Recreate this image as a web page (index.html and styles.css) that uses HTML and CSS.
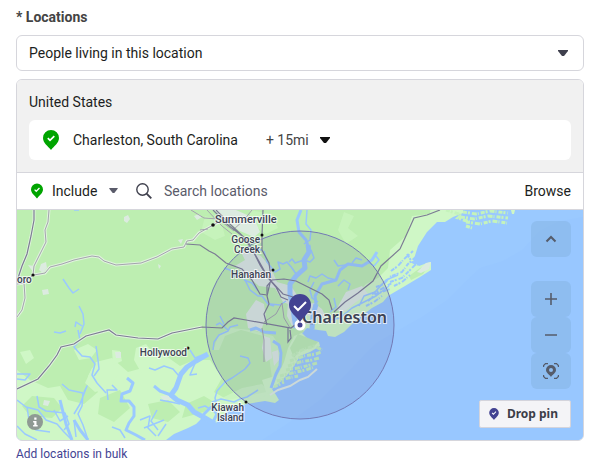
FILE: index.html
```html
<!DOCTYPE html>
<html lang="en">
<head>
    <meta charset="UTF-8">
    <meta name="viewport" content="width=device-width, initial-scale=1.0">
    <title>Locations</title>
    <link rel="stylesheet" href="styles.css">
</head>
<body>
    <svg class="defs" width="0" height="0" aria-hidden="true">
        <symbol id="pin" viewBox="0 0 16 20">
            <path d="M8 0a8 8 0 0 0-8 8c0 5 5 8 8 12c3-4 8-7 8-12a8 8 0 0 0-8-8z" fill="currentColor"/>
            <path d="M4.800 8.200l2.200 2.200l4.300-4.300" fill="none" stroke="#fff" stroke-width="1.700"/>
        </symbol>
        <symbol id="caret" viewBox="0 0 10 6">
            <path d="M0 0h10v1L6 6H4L0 1z" fill="currentColor"/>
        </symbol>
    </svg>

    <form class="locations">
        <label class="title" for="audience">* Locations</label>
        <div class="select-wrap audience">
            <select id="audience">
                <option>People living in this location</option>
                <option>People recently in this location</option>
            </select>
            <svg class="caret"><use href="#caret"/></svg>
        </div>

        <div class="panel">
            <div class="selected">
                <div class="country">United States</div>
                <div class="place">
                    <svg class="pin pin-large"><use href="#pin"/></svg>
                    <span class="place-name">Charleston, South Carolina</span>
                    <div class="select-wrap radius">
                        <select aria-label="Radius">
                            <option>+ 15mi</option>
                            <option>+ 25mi</option>
                        </select>
                        <svg class="caret"><use href="#caret"/></svg>
                    </div>
                </div>
            </div>

            <div class="search">
                <svg class="pin pin-small"><use href="#pin"/></svg>
                <div class="select-wrap mode">
                    <select aria-label="Include or exclude">
                        <option>Include</option>
                        <option>Exclude</option>
                    </select>
                    <svg class="caret"><use href="#caret"/></svg>
                </div>
                <svg class="search-icon" viewBox="0 0 16 16">
                    <circle cx="6.500" cy="6.500" r="5.700" fill="none" stroke="currentColor" stroke-width="1.400"/>
                    <path d="M10.600 10.600l4.700 4.700" stroke="currentColor" stroke-width="1.900"/>
                </svg>
                <input type="text" placeholder="Search locations" aria-label="Search locations">
                <button type="button" class="browse">Browse</button>
            </div>

            <div class="map">
                <svg class="map-canvas" viewBox="17 210 566 230" preserveAspectRatio="xMidYMid slice">
                    <rect class="water" x="-300" y="100" width="1200" height="500"/>
                    <path class="deep" d="M583 217L560 221L540 231L522 250L503 261L480 268L463 284L447 300L420 318L395 332L375 344L350 370L320 400L290 422L262 440H583z"/>

                    <!-- mainland and sea islands -->
                    <path class="marsh" d="M-300 100H466L463 213L453 217L445 222L437 222L427 232L418 246L413 262L419 266L427 263L431 262L431 270L420 277L405 286L393 293L388 296L383 302L372 308L360 317L350 326L344 332L335 337L328 336L326 331L318 330L307 328L302 333L309 340L319 342L320 346L310 352L300 356L294 366L288 374L278 384L272 389L276 395L279 400L275 403L265 401L247 404L231 408L222 416L216 423L208 422L202 418L196 424L188 428L174 434L166 440V500H-300z"/>
                    <path class="land" d="M-300 100H440L430 214L412 216L406 236L390 250L388 268L378 278L366 284L354 296L344 310L336 320L322 318L305 312L300 322L304 332L294 336L288 348L284 362L278 375L262 380L266 392L252 395L228 400L214 392L222 378L210 360L194 360L180 366L166 356L150 366L128 372L112 358L96 362L88 376L98 392L84 404L68 400L60 386L48 388L30 380L17 370L-300 370z"/>
                    <g class="marsh">
                        <path d="M92 368l14-6 12 12-8 14-15 4-10-9zM136 348l10-4 8 10 12 2 4 14-12 8-16-4-8-14zM112 350l8 1 2 10-9 4zM74 350l14-6 9 6-6 8-12 2zM20 352l10-2 4 8-8 6z"/>
                        <path d="M205 216l16 4 4 16-10 4-14-8zM250 210l22 4 6 14-12 6-16-12zM344 212l10 4-6 12 10 8-12 8-8-14z" opacity=".5"/>
                        <path d="M213 350l6-16 12-6 20 2 22 6 8 12v24l-8 14-4-30-6-20-22-6-16 6-6 14zM222 398l20-10 20-4 8 8-8 6-20 6-22 2z" opacity=".7"/>
                    </g>
                    <g class="land">
                        <path d="M32 396l22 2 8 10-10 10-22-2-8-10zM186 404l18-8 10 6-10 10-22 6zM148 404l20-4 12 12-12 10-16-4zM100 398l20-8 10 18-16 14-16-8zM409 276l11-8 8-2-5 8-12 6z"/>
                        <path d="M298 334l10 4 10 4-6 6-12 2-6 8-4-10z"/>
                    </g>

                    <!-- towns -->
                    <g class="urban">
                        <path d="M214 210l22 0 18 8 6 14-6 5-14-6-12-8zM247 250l14 6 10 12 6 14 14 4 8 12-6 8-10-4-8-14-16-2-14-12-10-8 10-6-4-8zM300 305l14-2 8 6 4 8-8 2-12-4zM346 292l16-6 6 8-12 8-12 10-8-2zM284 284l8 4 5 14 1 18-6 6-5-10 1-14zM256 300l8 4 2 14-6 14-12-4-2-14zM264 336l6 2 2 20-6 4-4-14zM272 352l6-2 1 10-5 6z"/>
                        <path d="M124 217l4-2 2 4-3 4-3-2zM41 264l5-2 1 6-4 5-4-3zM194 216l5-2 3 3-5 3zM178 240l5-1-2 5zM158 264l3 2-2 3zM28 265l6 1-1 6z"/>
                        <path d="M42 290l6-1 1 5-6 1zM115 352l6 0 0 6-5 0zM44 400l6 1-2 5-5-1zM160 396l10-1 3 4-9 2zM417 272l9-9 5-1-2 7-8 4z"/>
                    </g>

                    <!-- rivers and creeks -->
                    <g class="river wide">
                        <path d="M208 354L196 361L187 367L181 374L176 388L171 395L177 400L188 405L194 412L205 418L215 424"/>
                        <path d="M296 328L294 316L293 308L290 294L290 284L296 276L305 268L304 260L309 252L308 245"/>
                        <path d="M312 329L313 316L316 304"/>
                    </g>
                    <g class="river medium">
                        <path d="M171 395L160 391L154 386"/>
                        <path d="M308 246L306 240L299 232L297 220L301 210M316 304L315 296L322 284L336 280L340 270L348 264L362 266L372 260L377 252"/>
                        <path d="M273 341L279 345L281 353L280 366L276 374L271 388"/>
                        <path d="M127 378L133 383L130 391L122 394L121 401L129 401L134 407L134 416L129 423L126 430L136 435L145 440"/>
                        <path d="M202 420L204 414L211 407L217 414L213 422"/>
                        <path d="M250 330L256 328L264 332L276 333M60 400L66 424L72 440M74 420L80 430L88 440"/>
                    </g>
                    <g class="river">
                        <path d="M74 210L79 210M78 330L80 340L74 347L82 356L90 357L95 364L92 375L97 383L106 393"/>
                        <path d="M80 334L84 324L83 314L79 306M82 326L76 322L75 327M63 279L69 288L73 293L79 289M54 332L60 333L66 331"/>
                        <path d="M96 346L98 360L99 369L94 376M108 400L107 390L117 390L112 385"/>
                        <path d="M62 384L69 390L83 393L82 406L78 414L83 425L88 440M84 392L87 386L80 404L74 414"/>
                        <path d="M17 400L26 407L38 410L46 420L57 424L64 432L72 440M27 407L29 420L36 430L50 432M17 374L30 374L25 380L17 379M37 396L39 407L46 411L65 413L69 424L64 430M54 410L60 421L68 416M74 420L76 437M17 426L25 434L37 440"/>
                        <path d="M264 251L267 262L275 272L280 269L278 262L283 264L287 262L292 268L296 274M262 250L252 248M289 262L292 259L295 263L304 260M307 210L306 224L311 230L310 240L304 244M304 260L310 262L314 258L311 250"/>
                        <path d="M224 268L230 270L235 276L244 278L250 290L258 296L262 296L268 304L274 306M244 280L252 283L258 291M216 325L220 323L228 330M224 324L220 316M270 304L280 305L286 301"/>
                        <path d="M318 302L312 298L310 290L314 282M336 280L328 278L322 274L316 278L310 276L308 282M346 265L338 266L334 260M348 290L350 284L344 280L338 286M330 312L336 307L334 298M362 266L368 262L374 266L379 260L376 256M352 263L356 258L362 260"/>
                        <path d="M205 354L195 358L190 350M149 368L155 370L164 366L173 369L179 376M196 361L190 375L197 374M160 400L171 402L180 404M198 408L205 406L210 409"/>
                        <path d="M240 356L248 358L250 363L245 369L232 378L225 382L217 391L215 398L217 406M213 350L214 342L219 335L228 331L230 327L238 325M258 390L247 397L240 399L234 402L221 399L212 402"/>
                        <path d="M112 427L120 430L125 438M140 420L150 416L148 428L156 436M144 428L164 420M157 410L151 421L158 430M166 424L158 436"/>
                        <path d="M325 324L330 320L340 318L352 308L364 302L376 296L389 286M359 306L364 296L375 292L386 280L398 275"/>
                    </g>

                    <!-- marsh islets -->
                    <path class="islets land-islets" d="M446 210L462 215L458 218L472 223M463 212L476 214L490 211L508 213M461 217L474 219L488 216L508 218M466 222L480 224L492 221L507 223M466 226L472 228"/>
                    <path class="islets land-islets" d="M292 356L302 350L314 346L322 350M290 361L304 356L316 354L321 352M288 366L300 362L312 360L319 358M286 370L298 368L310 365L317 363M280 376L292 373L306 370L314 367M277 381L288 378L298 376M274 387L284 382"/>
                    <path class="spit" d="M270 395L278 390L290 386L300 380L308 377L317 369"/>
                    <path class="islets water-islets" d="M391 271L398 266L404 259L413 251M392 276L402 272L408 264L417 256M390 282L402 278L410 270L416 264M394 286L402 282L410 275M376 287L384 284L391 276M372 294L380 290L392 283M368 301L376 294L390 289M366 306L374 302L382 296M407 254L412 262L418 265"/>
                    <path class="marsh" d="M511 210h4l-1 4h-2z"/>

                    <!-- roads -->
                    <g class="roads-casing">
                        <path d="M49 210L48 222L45 230L46 242L39 256L34 266L33 275L24 283L17 284M24 283L25 298L22 310L17 317"/>
                        <path d="M34 275L45 273L50 267L62 264L74 260L92 256L99 257L104 261L116 265L141 263L157 257L172 249L184 247L187 241L193 240L199 233L206 229L219 222"/>
                        <path d="M34 210L34 220L31 236L27 254L22 266L17 281"/>
                        <path d="M17 389L38 379L49 366L57 355L61 347L74 344L86 336L109 330L116 335L138 338L158 339L172 333L202 327"/>
                    </g>
                    <g class="roads-minor">
                        <path d="M49 210L48 222L45 230L46 242L39 256L34 266L33 275L24 283L17 284M24 283L25 298L22 310L17 317"/>
                        <path d="M34 275L45 273L50 267L62 264L74 260L92 256L99 257L104 261L116 265L141 263L157 257L172 249L184 247L187 241L193 240L199 233L206 229L219 222"/>
                        <path d="M191 210L204 218L218 219L234 231M200 230L208 229M207 210L222 226L232 234M252 210L244 220L233 230M262 328L264 340V362M264 322L276 314L282 303L284 318L290 328"/>
                    </g>
                    <g class="roads">
                        <path d="M34 210L34 220L31 236L27 254L22 266L17 281"/>
                        <path d="M17 389L38 379L49 366L57 355L61 347L74 344L86 336L109 330L116 335L138 338L158 339L172 333L202 327L222 328L228 322L234 318L246 320L291 328L299 322L313 324"/>
                        <path d="M186 244L200 245L209 251L215 254L226 263L242 269L252 280L260 294L267 295M270 283L267 296L269 304L264 314L267 325"/>
                        <path d="M213 210L228 225L241 235L252 249L260 265L268 278L276 287L281 297L288 300M216 210L231 225L247 240L256 256L265 272L272 282L283 294L293 297"/>
                        <path d="M263 210L262 235L262 250L269 263L271 278"/>
                        <path d="M267 294L267 286L272 280L284 279L296 281L310 288L322 294L329 300L332 310M290 330L291 338L288 342L288 328M334 312L345 302L358 293L373 281L381 266L400 249L405 238L414 218L427 215L440 210"/>
                    </g>

                    <circle class="range" cx="300" cy="325" r="94"/>

                    <g class="dots">
                        <circle cx="33" cy="275" r="1.600"/>
                        <circle cx="213" cy="225" r="1.800"/>
                        <circle cx="262" cy="235" r="1.500"/>
                        <circle cx="273" cy="270" r="1.500"/>
                        <circle cx="188" cy="348" r="1.500"/>
                        <circle cx="246" cy="402" r="1.500"/>
                    </g>
                    <g class="names">
                        <text x="17" y="283">oro</text>
                        <text x="215" y="223" class="town">Summerville</text>
                        <text x="260" y="243" text-anchor="end">Goose</text>
                        <text x="260" y="253" text-anchor="end">Creek</text>
                        <text x="271" y="278" text-anchor="end">Hanahan</text>
                        <text x="187" y="356" text-anchor="end">Hollywood</text>
                        <text x="244" y="411" text-anchor="end">Kiawah</text>
                        <text x="244" y="421" text-anchor="end">Island</text>
                        <text x="302" y="323" class="city">Charleston</text>
                    </g>

                    <circle cx="300" cy="325" r="4" fill="#434392" stroke="#fff" stroke-width="3"/>
                    <path d="M300 294a11 11 0 0 0-11 11c0 7 7 11 11 17c4-6 11-10 11-17a11 11 0 0 0-11-11z" fill="#434392"/>
                    <path d="M294 306l4 4l8-8" fill="none" stroke="#fff" stroke-width="2"/>
                </svg>

                <div class="controls">
                    <button type="button" class="collapse" aria-label="Collapse map">
                        <svg viewBox="0 0 16 16"><path d="M3.500 10.500L8 6l4.500 4.500" stroke-width="2"/></svg>
                    </button>
                    <button type="button" aria-label="Zoom in">
                        <svg viewBox="0 0 16 16"><path d="M2 8h12M8 2v12" stroke-width="1.600"/></svg>
                    </button>
                    <button type="button" aria-label="Zoom out">
                        <svg viewBox="0 0 16 16"><path d="M2 8h12" stroke-width="1.600"/></svg>
                    </button>
                    <button type="button" aria-label="Center map">
                        <svg viewBox="0 0 16 16">
                            <path d="M.6 4V2.500L2.500.6H5M11 .6h2.500l1.900 1.900V4M.6 12v1.500l1.900 1.900H5M11 15.400h2.500l1.900-1.900V12" stroke-width="1.200"/>
                            <path d="M8 2a5 5 0 0 0-5 5c0 3 3.500 4.500 5 7c1.500-2.500 5-4 5-7a5 5 0 0 0-5-5zm0 3a2 2 0 1 1 0 4a2 2 0 0 1 0-4z" class="solid"/>
                        </svg>
                    </button>
                </div>

                <button type="button" class="info" aria-label="Map information">
                    <svg viewBox="0 0 16 16"><path d="M7 2h3v3H7zM5.500 6.500H10V12h1.500v2h-6v-2H7V8.500H5.500z" fill="#fff"/></svg>
                </button>

                <button type="button" class="drop-pin">
                    <svg class="pin"><use href="#pin"/></svg>
                    Drop pin
                </button>
            </div>
        </div>

        <a class="bulk" href="#">Add locations in bulk</a>
    </form>
</body>
</html>
```

FILE: styles.css
```css
:root {
    --border: #d6d6dc;
    --text: #1c1e21;
    --muted: #5a5b6a;
    --brand: #434392;
    --green: #00a400;
}

* {
    box-sizing: border-box;
}

body {
    margin: 0;
    background: #fff;
    color: var(--text);
    font-family: Roboto, "Liberation Sans", sans-serif;
    font-size: 14px;
    line-height: 20px;
}

button,
input,
select {
    margin: 0;
    padding: 0;
    border: 0;
    background: none;
    color: inherit;
    font: inherit;
}

button,
select {
    cursor: pointer;
}

.defs {
    position: absolute;
}

.locations {
    padding: 7px 11px 8px 16px;
}

.title {
    display: block;
    margin-bottom: 8px;
    color: #444;
    font-weight: 700;
}

.select-wrap {
    position: relative;
}

.select-wrap select {
    width: 100%;
    height: 100%;
    appearance: none;
}

.caret {
    position: absolute;
    top: 50%;
    right: 0;
    width: 10px;
    height: 6px;
    margin-top: -3px;
    pointer-events: none;
}

.audience {
    height: 36px;
    margin-bottom: 8px;
    border: 1px solid var(--border);
    border-radius: 6px;
}

.audience select {
    padding: 0 12px;
}

.audience .caret {
    right: 15px;
    color: #3f404d;
}

.panel {
    overflow: hidden;
    border: 1px solid var(--border);
    border-radius: 6px;
}

.selected {
    padding: 12px;
    border-bottom: 1px solid var(--border);
    background: #f1f1f1;
}

.country {
    margin-bottom: 8px;
}

.place {
    display: flex;
    align-items: center;
    height: 40px;
    padding: 0 14px;
    border-radius: 6px;
    background: #fff;
}

.pin {
    flex: none;
    color: var(--green);
}

.pin-large {
    width: 16px;
    height: 20px;
    margin-right: 14px;
}

.place-name {
    margin-right: 28px;
}

.radius {
    width: 64px;
    color: #444;
}

.radius .caret {
    color: #111;
}

.search {
    display: flex;
    align-items: center;
    height: 37px;
    padding: 0 12px 0 14px;
    border-bottom: 1px solid var(--border);
}

.pin-small {
    width: 12px;
    height: 16px;
    margin-right: 9px;
}

.mode {
    width: 66px;
    margin-right: 18px;
}

.mode .caret {
    width: 9px;
    height: 5px;
    color: var(--muted);
}

.search-icon {
    flex: none;
    width: 16px;
    height: 16px;
    margin-right: 12px;
    color: #3f404d;
}

.search input {
    flex: 1;
    min-width: 0;
    outline: none;
}

.search input::placeholder {
    color: var(--muted);
    opacity: 1;
}

.map {
    position: relative;
    height: 230px;
}

.map-canvas {
    display: block;
    width: 100%;
    height: 100%;
}

.water {
    fill: #9ac9ff;
}

.deep {
    fill: #98c7ff;
}

.land {
    fill: #bdeeb1;
}

.marsh {
    fill: #cff7c6;
}

.urban {
    fill: #dcebe0;
}

.river {
    fill: none;
    stroke: #9ac9ff;
    stroke-width: 1.5;
    stroke-linejoin: round;
}

.river.medium {
    stroke-width: 3;
}

.river.wide {
    stroke-width: 5;
}

.islets {
    fill: none;
    stroke-width: 2;
    stroke-dasharray: 4 1 2 2 5 1 1 2;
}

.land-islets {
    stroke: #c5f3bb;
    stroke-width: 3;
}

.water-islets {
    stroke: #9ac9ff;
}

.spit {
    fill: none;
    stroke: #dfeee2;
    stroke-width: 2;
}

.roads,
.roads-minor,
.roads-casing {
    fill: none;
    stroke: #7c7c94;
    stroke-width: 1.2;
}

.roads-minor {
    stroke: #a3a3ad;
    stroke-width: 1;
}

.roads-casing {
    stroke: #dff3dc;
    stroke-width: 3;
}

.range {
    fill: rgba(80, 76, 150, 0.13);
    stroke: #7279b4;
    stroke-width: 1;
}

.dots {
    fill: #111;
}

.names {
    fill: #3c4254;
    stroke: rgba(255, 255, 255, 0.7);
    stroke-width: 2;
    paint-order: stroke;
    font-family: Roboto, "Noto Sans", sans-serif;
    font-size: 10px;
    font-weight: 500;
}

.names .town {
    font-size: 11px;
}

.names .city {
    font-family: "Noto Sans", sans-serif;
    font-size: 16px;
    font-weight: 600;
}

.controls {
    position: absolute;
    top: 11px;
    right: 12px;
    display: flex;
    flex-direction: column;
}

.controls button {
    display: flex;
    align-items: center;
    justify-content: center;
    width: 40px;
    height: 36px;
    border-radius: 6px;
    background: rgba(120, 165, 205, 0.3);
}

.controls .collapse {
    margin-bottom: 24px;
}

.controls svg {
    width: 16px;
    height: 16px;
    fill: none;
    stroke: #555c6b;
}

.controls .solid {
    fill: #555c6b;
    fill-rule: evenodd;
    stroke: none;
}

.info {
    position: absolute;
    bottom: 10px;
    left: 10px;
    width: 16px;
    height: 16px;
    border-radius: 50%;
    background: #8f9a94;
}

.info svg {
    display: block;
    width: 12px;
    height: 12px;
    margin: 2px;
}

.drop-pin {
    position: absolute;
    right: 12px;
    bottom: 12px;
    display: flex;
    align-items: center;
    height: 28px;
    padding: 0 12px 0 9px;
    border: 1px solid #d4d4dc;
    border-radius: 2px;
    background: #f4f4f7;
    color: #3c3d48;
    font-family: "Noto Sans", sans-serif;
    font-size: 12px;
    font-weight: 700;
}

.drop-pin .pin {
    width: 10px;
    height: 12px;
    margin-right: 8px;
    color: var(--brand);
}

.bulk {
    display: inline-block;
    margin-top: 3px;
    color: var(--brand);
    font-size: 12px;
    text-decoration: none;
}
```
